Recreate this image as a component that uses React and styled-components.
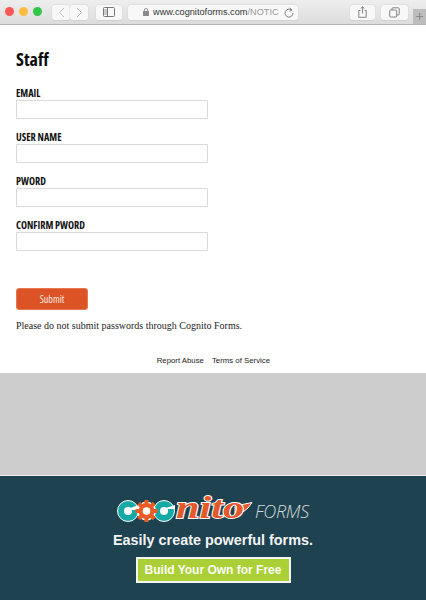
import React from "react";
import styled, { createGlobalStyle } from "styled-components";

const Global = createGlobalStyle`
  html, body { margin: 0; padding: 0; background: #fff; }
  #root { width: 426px; height: 600px; overflow: hidden; }
  * { box-sizing: border-box; }
`;

const Page = styled.div`
  width: 426px;
  height: 600px;
  display: flex;
  flex-direction: column;
  overflow: hidden;
`;

const Chrome = styled.header`
  height: 25px;
  flex: none;
  display: flex;
  align-items: center;
  padding-left: 5px;
  background: linear-gradient(#eeeeee, #dcdcdc);
  border-bottom: 1px solid #b5b5b5;
`;

const Lights = styled.div`
  display: flex;
  gap: 5px;
  margin-right: 10px;
  margin-top: -1px;
`;

const Light = styled.span`
  width: 9px;
  height: 9px;
  border-radius: 50%;
  background: ${(p) => p.$c};
`;

const ToolButton = styled.div`
  width: ${(p) => p.$w}px;
  height: 15px;
  flex: none;
  margin-left: ${(p) => p.$ml || 0}px;
  display: flex;
  align-items: center;
  justify-content: center;
  background: #f8f8f8;
  border-radius: 3px;
  box-shadow: 0 0 0 0.5px #d8d8d8, 0 1px 0 #cacaca;
  color: #6f6f6f;
`;

const NavPair = styled.div`
  display: flex;
`;

const UrlBar = styled.div`
  width: 170px;
  height: 15px;
  flex: none;
  margin-left: 6px;
  padding: 0 4px 0 15px;
  display: flex;
  align-items: center;
  background: #f8f8f8;
  border-radius: 3px;
  box-shadow: 0 0 0 0.5px #d8d8d8, 0 1px 0 #cacaca;
  font: 9.2px "Liberation Sans", Arial, sans-serif;
  color: #333;
  position: relative;
`;

const Lock = styled.svg`
  position: absolute;
  left: 15px;
  top: 3px;
`;

const UrlText = styled.span`
  margin-left: 10px;
  white-space: nowrap;
  flex: 1;
  overflow: hidden;
`;

const UrlFade = styled.span`
  color: #9a9a9a;
`;

const NewTab = styled.div`
  width: 13px;
  height: 15px;
  flex: none;
  margin-left: 5px;
  align-self: flex-end;
  background: #bdbdbd;
  color: #8a8a8a;
  font: 14px/15px "Liberation Sans", Arial, sans-serif;
  text-align: center;
`;

const Form = styled.main`
  height: 348px;
  flex: none;
  padding: 23px 16px 0;
  background: #fff;
`;

const Title = styled.h1`
  margin: 0 0 18px;
  font: 700 18px/22px "Open Sans", sans-serif;
  font-stretch: 75%;
  color: #0b0b0b;
`;

const Field = styled.div`
  margin-bottom: 13px;
`;

const Label = styled.label`
  display: block;
  height: 12px;
  font: 700 10.2px/11px "Open Sans", sans-serif;
  font-stretch: 75%;
  color: #111;
`;

const Input = styled.input`
  display: block;
  width: 192px;
  height: 19px;
  padding: 0;
  background: #fff;
  border: 1px solid #d9d9d9;
  border-radius: 1px;
  outline: none;
`;

const Submit = styled.button`
  display: block;
  width: 72px;
  height: 22px;
  margin-top: 37px;
  padding: 0;
  background: #dc5426;
  border: 1px solid #e8764f;
  border-radius: 3px;
  color: #fbe9e2;
  font: 10px "Open Sans", sans-serif;
  font-stretch: 75%;
`;

const Notice = styled.p`
  margin: 9px 0 0;
  font: 10px/14px "Liberation Serif", "Times New Roman", serif;
  color: #1c1c1c;
`;

const Links = styled.nav`
  display: flex;
  justify-content: flex-end;
  gap: 8px;
  margin: 23px 140px 0 0;
  font: 7.8px/10px "Liberation Sans", Arial, sans-serif;
  color: #222;
`;

const Gap = styled.div`
  height: 103px;
  flex: none;
  background: #cccccc;
  border-bottom: 1px solid #eeeeee;
`;

const Promo = styled.footer`
  flex: 1;
  display: flex;
  flex-direction: column;
  align-items: center;
  padding-top: 12px;
  background: #1f4250;
`;

const LogoRow = styled.div`
  display: flex;
  align-items: flex-end;
  height: 36px;
`;

const Forms = styled.span`
  margin-left: 2px;
  margin-bottom: 3px;
  font: italic 300 18px/20px "Open Sans", sans-serif;
  letter-spacing: -0.3px;
  color: #d4dadd;
`;

const Tagline = styled.div`
  margin-top: 7px;
  font: 700 14.4px/18px "Liberation Sans", Arial, sans-serif;
  color: #f2f4f4;
`;

const Cta = styled.div`
  margin-top: 8px;
  width: 155px;
  height: 26px;
  display: flex;
  align-items: center;
  justify-content: center;
  background: #abcf36;
  border: 2px solid #f4f6f0;
  color: #fbfdf5;
  font: 700 12px "Liberation Sans", Arial, sans-serif;
`;

const NitoText = styled.text`
  font: italic 700 32px "Liberation Serif", serif;
  fill: #e4582a;
  stroke: #fff;
  stroke-width: 1.8px;
  paint-order: stroke;
`;

const Gear = ({ x }) => {
  const teeth = [0, 45, 90, 135];
  return (
    <g transform={`translate(${x} 17)`}>
      <circle r="9.6" fill="#fff" />
      {teeth.map((a) => (
        <rect key={a} x="-2" y="-11" width="4" height="22" fill="#e85d25" transform={`rotate(${a})`} />
      ))}
      <circle r="8" fill="#e85d25" />
      <circle r="3.8" fill="#fff" />
    </g>
  );
};

const Ring = ({ x }) => (
  <g>
    <circle cx={x} cy="17" r="10.5" fill="#16a9a6" stroke="#fff" strokeWidth="1" />
    <circle cx={x} cy="17" r="4" fill="#fff" />
  </g>
);

const Logo = () => (
  <svg width="136" height="36" viewBox="0 -6 136 36">
    <Ring x={11} />
    <path d="M13 14 L22 11 V16 H13 Z" fill="#fff" />
    <Ring x={47} />
    <path d="M49 14 L58 11 V15 H49 Z" fill="#fff" />
    <Gear x={29.5} />
    <path d="M118 12 L135 8.5 L131 14 L124 19.5 L118 19.5 Z" fill="#e4582a" stroke="#fff" strokeWidth="1" strokeLinejoin="round" />
    <NitoText x="59" y="24" textLength="68" lengthAdjust="spacingAndGlyphs">nito</NitoText>
  </svg>
);

export default function App() {
  return (
    <Page>
      <Global />
      <Chrome>
        <Lights>
          <Light $c="#fc5753" />
          <Light $c="#fdbc40" />
          <Light $c="#33c748" />
        </Lights>
        <NavPair>
          <ToolButton $w={18}>
            <svg width="7" height="11" viewBox="0 0 7 11" fill="none" stroke="#b9b9b9" strokeWidth="1">
              <path d="M6 1 L1.5 5.5 L6 10" />
            </svg>
          </ToolButton>
          <ToolButton $w={18}>
            <svg width="7" height="11" viewBox="0 0 7 11" fill="none" stroke="#b9b9b9" strokeWidth="1">
              <path d="M1 1 L5.5 5.5 L1 10" />
            </svg>
          </ToolButton>
        </NavPair>
        <ToolButton $w={26} $ml={8}>
          <svg width="12" height="10" viewBox="0 0 12 10" fill="none" stroke="#777" strokeWidth="1">
            <rect x="0.5" y="0.5" width="11" height="9" rx="1" />
            <path d="M4.5 0.5 V9.5" />
            <path d="M1 2 H4 V8 H1 Z" fill="#ccc" stroke="none" />
          </svg>
        </ToolButton>
        <UrlBar>
          <Lock width="6" height="8" viewBox="0 0 6 8">
            <rect x="0" y="3" width="6" height="5" rx="0.6" fill="#8a8a8a" />
            <path d="M1.3 3.5 V2.2 a1.7 1.7 0 0 1 3.4 0 V3.5" fill="none" stroke="#8a8a8a" strokeWidth="0.9" />
          </Lock>
          <UrlText>
            www.cognitoforms.com<UrlFade>/NOTIC</UrlFade>
          </UrlText>
          <svg width="10" height="11" viewBox="0 0 10 11" fill="none" stroke="#777" strokeWidth="0.9">
            <path d="M7.5 3 A4 4 0 1 0 9 6" />
            <path d="M5.7 0.8 L8 3 L5.4 4.2" />
          </svg>
        </UrlBar>
        <ToolButton $w={25} $ml={52}>
          <svg width="9" height="12" viewBox="0 0 9 12" fill="none" stroke="#777" strokeWidth="0.9">
            <path d="M2.5 4.5 H0.8 V11.3 H8.2 V4.5 H6.5" />
            <path d="M4.5 7.5 V0.8 M2.6 2.6 L4.5 0.8 L6.4 2.6" />
          </svg>
        </ToolButton>
        <ToolButton $w={27} $ml={6}>
          <svg width="11" height="11" viewBox="0 0 11 11" fill="none" stroke="#777" strokeWidth="0.9">
            <rect x="0.7" y="3" width="7" height="7" rx="1" />
            <path d="M3 3 V1.8 a1 1 0 0 1 1 -1 H9.2 a1 1 0 0 1 1 1 V7 a1 1 0 0 1 -1 1 H8" />
          </svg>
        </ToolButton>
        <NewTab>+</NewTab>
      </Chrome>
      <Form>
        <Title>Staff</Title>
        <Field>
          <Label>EMAIL</Label>
          <Input />
        </Field>
        <Field>
          <Label>USER NAME</Label>
          <Input />
        </Field>
        <Field>
          <Label>PWORD</Label>
          <Input />
        </Field>
        <Field>
          <Label>CONFIRM PWORD</Label>
          <Input />
        </Field>
        <Submit>Submit</Submit>
        <Notice>Please do not submit passwords through Cognito Forms.</Notice>
        <Links>
          <span>Report Abuse</span>
          <span>Terms of Service</span>
        </Links>
      </Form>
      <Gap />
      <Promo>
        <LogoRow>
          <Logo />
          <Forms>FORMS</Forms>
        </LogoRow>
        <Tagline>Easily create powerful forms.</Tagline>
        <Cta>Build Your Own for Free</Cta>
      </Promo>
    </Page>
  );
}
